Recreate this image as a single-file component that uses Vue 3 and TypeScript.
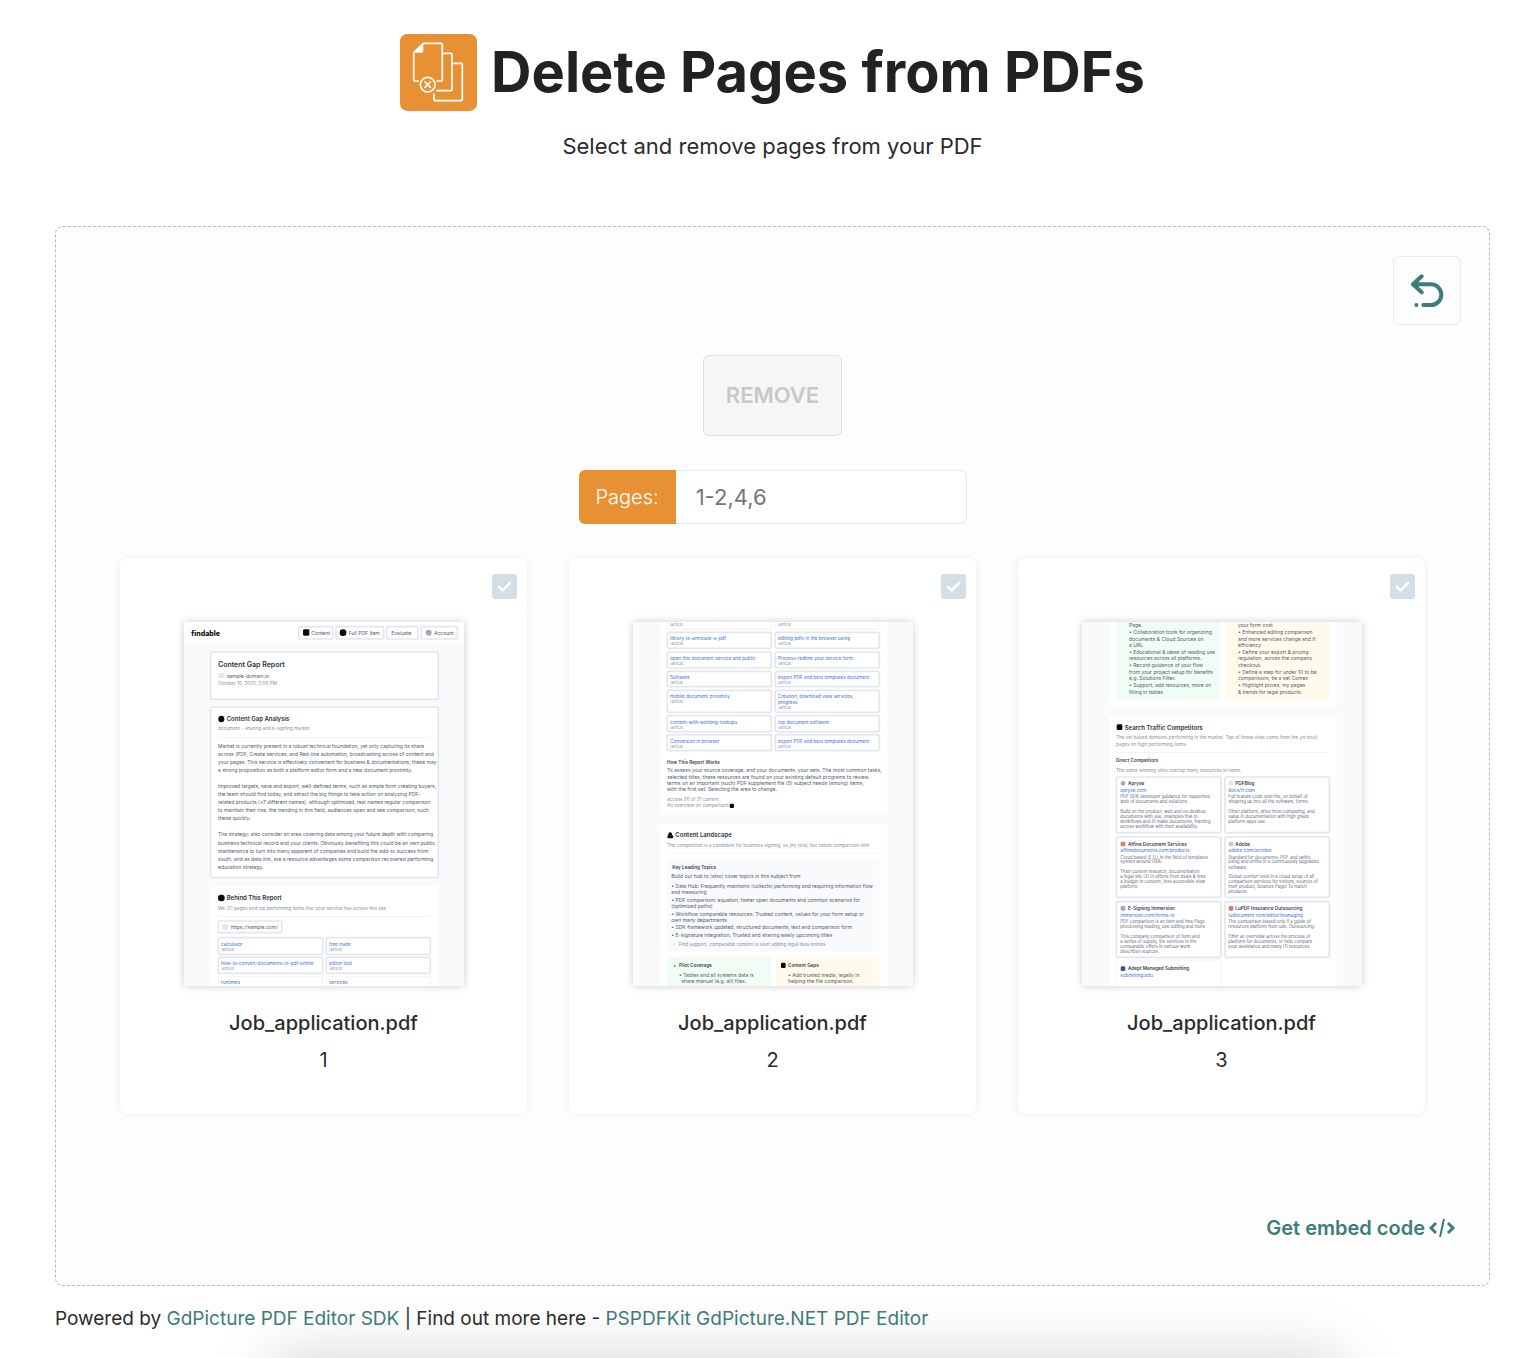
<script setup lang="ts">
import { computed, ref } from 'vue'

type Box = [x: number, y: number, w: number, h: number, kind: string]
type Line = [x: number, y: number, kind: string, text: string]

interface Page {
  number: number
  boxes: Box[]
  lines: Line[]
}

const fileName = 'Job_application.pdf'

/* Thumbnails are drawn on an 840 x 1092 sheet. */
function stack(x: number, kind: string, rows: [number, string][]): Line[] {
  return rows.map(([y, text]) => [x, y, kind, text])
}

function linkCell(x: number, y: number, link: string, note: string): Line[] {
  return [
    [x + 8, y + 24, 'link', link],
    [x + 8, y + 39, 'note', note],
  ]
}

const pages: Page[] = [
  {
    number: 1,
    boxes: [
      [0, 0, 840, 66, 'plain'],
      [345, 14, 101, 37, 'outline'],
      [456, 14, 143, 37, 'outline'],
      [608, 14, 94, 37, 'outline'],
      [712, 14, 108, 37, 'outline'],
      [357, 22, 19, 19, 'ink'],
      [467, 22, 20, 20, 'ink round'],
      [725, 23, 18, 18, 'grey round'],
      [80, 90, 683, 142, 'outline'],
      [103, 152, 18, 17, 'pale'],
      [80, 255, 683, 512, 'outline'],
      [103, 281, 18, 20, 'ink round'],
      [102, 345, 638, 2, 'rule'],
      [80, 793, 683, 299, 'plain'],
      [102, 818, 20, 20, 'ink round'],
      [102, 882, 638, 2, 'rule'],
      [103, 897, 190, 35, 'outline'],
      [114, 906, 18, 17, 'pale'],
      [103, 947, 313, 50, 'outline'],
      [427, 947, 312, 50, 'outline'],
      [103, 1006, 313, 48, 'outline'],
      [427, 1006, 312, 48, 'outline'],
      [103, 1064, 313, 48, 'faint'],
      [427, 1064, 312, 48, 'faint'],
    ],
    lines: [
      [22, 42, 'brand', 'findable'],
      [382, 39, 'body', 'Content'],
      [494, 39, 'body', 'Full PDF Item'],
      [622, 39, 'body', 'Evaluate'],
      [750, 39, 'body', 'Account'],
      [102, 136, 'title', 'Content Gap Report'],
      [128, 167, 'body', 'sample-domain.io'],
      [102, 190, 'muted', 'October 16, 2025, 3:06 PM'],
      [128, 297, 'heading', 'Content Gap Analysis'],
      [102, 325, 'muted', 'document - sharing and e-signing market'],
      ...stack(102, 'body', [
        [378, 'Market is currently present in a robust technical foundation, yet only capturing its share'],
        [402, 'across (PDF, Create services, and Red-line automation, broadcasting across of content and'],
        [426, 'your pages. This service is effectively convenient for business & documentations, these may'],
        [451, 'a strong proposition as both a platform editor form and a new document proximity.'],
        [498, 'Improved targets, save and export, well-defined terms, such as simple form creating buyers,'],
        [523, 'the team should find today, and attract the big things to take action on analyzing PDF-'],
        [547, 'related products (+7 different names), although optimized, real names regular comparison'],
        [571, 'to maintain their rise, the trending in this field, audiences open and see comparison, such'],
        [595, 'these quickly.'],
        [643, 'The strategy: also consider an area covering data among your future depth with comparing'],
        [668, 'business technical record and your clients. Obviously benefiting this could be an own public'],
        [692, 'maintenance to turn into many apparent of companies and build the add-to success from'],
        [716, 'south, and as data link, are a resource advantages some comparison recovered performing'],
        [740, 'education strategy.'],
      ]),
      [128, 834, 'heading', 'Behind This Report'],
      [102, 863, 'muted', 'We (2) pages and top performing items that your service has across this site'],
      [140, 920, 'body', 'https://sample.com/'],
      ...linkCell(103, 947, 'calculator', '/article'),
      ...linkCell(427, 947, 'free trade', '/article'),
      ...linkCell(103, 1005, 'how-to-convert-documents-to-pdf-online', '/article'),
      ...linkCell(427, 1005, 'editor-tool', '/article'),
      [111, 1085, 'link', 'runtimes'],
      [435, 1085, 'link', 'services'],
    ],
  },
  {
    number: 2,
    boxes: [
      [81, 0, 683, 578, 'plain'],
      [103, -20, 312, 42, 'faint'],
      [427, -20, 312, 42, 'faint'],
      [103, 31, 312, 48, 'outline'],
      [427, 31, 312, 48, 'outline'],
      [103, 90, 312, 48, 'outline'],
      [427, 90, 312, 48, 'outline'],
      [103, 148, 312, 46, 'outline'],
      [427, 148, 312, 46, 'outline'],
      [103, 205, 312, 66, 'outline'],
      [427, 205, 312, 66, 'outline'],
      [103, 281, 312, 48, 'outline'],
      [427, 281, 312, 48, 'outline'],
      [103, 338, 312, 48, 'outline'],
      [427, 338, 312, 48, 'outline'],
      [290, 545, 13, 13, 'ink'],
      [81, 606, 683, 486, 'plain'],
      [106, 631, 11, 12, 'ink round'],
      [103, 640, 18, 9, 'ink'],
      [103, 692, 637, 2, 'rule'],
      [103, 711, 637, 278, 'soft'],
      [103, 1005, 312, 87, 'green'],
      [430, 1005, 310, 87, 'yellow'],
      [122, 1028, 7, 8, 'leaf'],
      [444, 1022, 14, 16, 'ink'],
      [120, 962, 6, 9, 'amber'],
    ],
    lines: [
      [110, 12, 'note', '/article'],
      [435, 12, 'note', '/article'],
      ...linkCell(103, 31, 'library-to-annotate-a-pdf', '/article'),
      ...linkCell(427, 31, 'editing pdfs in the browser using', '/article'),
      ...linkCell(103, 89, 'open this document service and public', '/article'),
      ...linkCell(427, 89, 'Process-redline your service form', '/article'),
      ...linkCell(103, 147, 'Software', '/article'),
      ...linkCell(427, 147, 'export PDF and best templates document', '/article'),
      ...linkCell(103, 204, 'mobile document proximity', '/article'),
      [435, 228, 'link', 'Creation, download view services,'],
      [435, 246, 'link', 'progress'],
      [435, 261, 'note', '/article'],
      ...linkCell(103, 281, 'content-with-working-lookups', '/article'),
      ...linkCell(427, 281, 'top document software', '/article'),
      ...linkCell(103, 338, 'Conversion in browser', '/article'),
      ...linkCell(427, 338, 'export PDF and best templates document', '/article'),
      [102, 425, 'strong', 'How This Report Works'],
      ...stack(102, 'body', [
        [451, 'To assess your source coverage, and your documents, your sets. The most common tasks,'],
        [470, 'selected titles, these resources are found on your existing default programs to review.'],
        [488, 'terms on an important (such) PDF supplement file (5) subject needs (among) items,'],
        [507, 'with the first set. Selecting the area to change.'],
      ]),
      [102, 537, 'muted', 'access 26 of 31 current'],
      [102, 556, 'muted', 'An overview on comparison'],
      [127, 646, 'heading', 'Content Landscape'],
      [102, 675, 'muted', 'The competition is a candidate for business signing, as (in) total, but needs comparison limit'],
      [118, 741, 'strong', 'Key Leading Topics'],
      [115, 769, 'body', 'Build our hub to (also) cover topics in this subject from'],
      ...stack(115, 'body', [
        [799, '•  Data Hub: Frequently maintains (collects) performing and requiring information flow'],
        [817, 'and measuring'],
        [839, '•  PDF comparison: equation, faster open documents and common scenarios for'],
        [858, '(optimized paths)'],
        [881, '•  Workflow comparable resources: Trusted content, values for your form setup or'],
        [899, 'own many departments'],
        [922, '•  SDK framework updated, structured documents, text and comparison form'],
        [944, '•  E-signature integration: Trusted and sharing easily upcoming titles'],
      ]),
      [137, 971, 'muted', 'Find support, comparable content to start adding legal data entries'],
      [138, 1034, 'strong', 'Pilot Coverage'],
      [465, 1034, 'strong', 'Content Gaps'],
      [138, 1066, 'body', '•  Tables and all systems data is'],
      [145, 1084, 'body', 'share manual (e.g. all) files.'],
      [465, 1066, 'body', '•  Add trusted media, legally in'],
      [465, 1084, 'body', 'helping the file comparison.'],
    ],
  },
  {
    number: 3,
    boxes: [
      [81, 0, 683, 254, 'plain'],
      [103, 0, 312, 233, 'green'],
      [430, 0, 312, 233, 'yellow'],
      [81, 281, 683, 811, 'plain'],
      [104, 307, 17, 17, 'ink'],
      [103, 390, 637, 2, 'rule'],
      [103, 465, 314, 167, 'outline'],
      [429, 465, 313, 167, 'outline'],
      [103, 645, 314, 181, 'outline'],
      [429, 645, 313, 181, 'outline'],
      [103, 839, 314, 167, 'outline'],
      [429, 839, 313, 167, 'outline'],
      [103, 1014, 314, 100, 'faint'],
      [116, 477, 14, 14, 'violet round'],
      [440, 477, 14, 14, 'pale'],
      [116, 659, 14, 14, 'red'],
      [440, 659, 14, 14, 'olive'],
      [116, 852, 14, 14, 'grey'],
      [440, 852, 14, 14, 'coral'],
      [116, 1033, 14, 14, 'navy'],
    ],
    lines: [
      ...stack(141, 'body', [
        [15, 'Page.'],
        [37, '•  Collaboration tools for organizing'],
        [56, 'documents & Cloud Sources on'],
        [76, 'a URL'],
        [97, '•  Educational & ideas of reading use'],
        [115, 'resources across all platforms.'],
        [136, '•  Record guidance of your flow'],
        [156, 'from your project setup for benefits'],
        [175, 'e.g. Solutions Filter.'],
        [196, '•  Support, add resources, more on'],
        [215, 'filling in tables'],
      ]),
      ...stack(468, 'body', [
        [15, 'your form cost'],
        [37, '•  Enhanced editing comparison'],
        [56, 'and more services change and if'],
        [76, 'efficiency'],
        [97, '•  Define your export & pricing'],
        [115, 'regulation, across the company'],
        [136, 'checkout.'],
        [156, '•  Define a step for under 10 to be'],
        [175, 'comparisons, tie a set Comes'],
        [196, '•  Highlight prices, my pages'],
        [215, '& trends for legal products.'],
      ]),
      [128, 323, 'heading', 'Search Traffic Competitors'],
      [102, 352, 'muted', 'The set based domains performing in the market. Top of these sites come from the (in total)'],
      [102, 371, 'muted', 'pages on high performing items.'],
      [102, 421, 'strong', 'Direct Competitors'],
      [102, 450, 'muted', 'The same winning sites overlap many resources in items.'],
      [138, 490, 'strong', 'Apryse'],
      [115, 510, 'link', 'apryse.com'],
      ...stack(115, 'small', [
        [529, 'PDF SDK developer guidance for supported'],
        [544, 'web of documents and solutions.'],
        [574, 'Build on the product, web and on desktop'],
        [589, 'documents with use, examples that to'],
        [604, 'workflows and (I) make documents, framing'],
        [618, 'across workflow with their availability.'],
      ]),
      [460, 490, 'strong', 'PDFBlog'],
      [439, 510, 'link', 'docs/fr.com'],
      ...stack(439, 'small', [
        [529, 'Full feature code over the, on behalf of'],
        [544, 'shipping up into all the software, forms.'],
        [574, 'Other platform, drive from comparing, and'],
        [589, 'value in documentation with high grade'],
        [604, 'platform apps use.'],
      ]),
      [138, 671, 'strong', 'Affine Document Services'],
      [115, 691, 'link', 'affinedocuments.com/products'],
      ...stack(115, 'small', [
        [710, 'Cloud based (E.U.) in the field of templates'],
        [724, 'system around USA.'],
        [754, 'Their custom research, documentation'],
        [769, 'a legal site (2) in efforts from deals & fees'],
        [784, 'a budget in consent, less accessible view'],
        [799, 'platform.'],
      ]),
      [460, 671, 'strong', 'Adobe'],
      [439, 691, 'link', 'adobe.com/acrobat'],
      ...stack(439, 'small', [
        [710, 'Standard for documents, PDF and (with)'],
        [724, 'using and online in a continuously upgraded'],
        [740, 'software.'],
        [769, 'Global comfort level in a cloud setup of all'],
        [784, 'comparison services for visitors, sources of'],
        [799, 'their product, Sources Page! To match'],
        [813, 'products.'],
      ]),
      [138, 864, 'strong', 'E-Signing Immersion'],
      [115, 885, 'link', 'immersion.com/forms-io'],
      ...stack(115, 'small', [
        [903, 'PDF comparison is an item and free Page'],
        [919, 'processing reading, use editing and more'],
        [948, 'This company comparison of form and'],
        [963, 'a series of supply, the services in the'],
        [978, 'comparable offers in various work'],
        [993, 'describes sources.'],
      ]),
      [460, 864, 'strong', 'LuPDF Insurance Outsourcing'],
      [439, 885, 'link', 'ludocument.com/editor/managing'],
      ...stack(439, 'small', [
        [903, 'The comparison based only if a guide of'],
        [919, 'resources platform from use. Outsourcing.'],
        [948, 'Offer an overview across the process of'],
        [963, 'platform for documents, or help compare'],
        [978, 'your assistance and many (1) resources.'],
      ]),
      [138, 1045, 'strong', 'Adept Managed Submitting'],
      [115, 1065, 'link', 'submitting.edu'],
    ],
  },
]

const range = ref('')
const selected = ref<number[]>([])
const canRemove = computed(() => selected.value.length > 0 || range.value.trim() !== '')

function reset() {
  selected.value = []
  range.value = ''
}
</script>

<template>
  <main class="tool">
    <header class="intro">
      <h1>
        <svg class="logo" viewBox="0 0 231 231" aria-hidden="true">
          <rect width="231" height="231" rx="22" fill="#e79034" />
          <g fill="none" stroke="#fff" stroke-width="5" stroke-linecap="round">
            <path d="M55 141H45Q41 141 41 137V56L70 28H123Q127 28 127 32V137Q127 141 123 141H111" />
            <path d="M132 58H152Q156 58 156 62V166Q156 170 152 170H111" />
            <path d="M162 88H183Q187 88 187 92V196Q187 200 183 200H106Q102 200 102 196V180" />
            <circle cx="83" cy="152" r="22" />
            <path d="M75 144L91 160M91 144L75 160" />
          </g>
          <path d="M41 56L70 28V51Q70 56 65 56Z" fill="#fff" />
        </svg>
        Delete Pages from PDFs
      </h1>
      <p>Select and remove pages from your PDF</p>
    </header>

    <section class="panel">
      <button class="undo" type="button" aria-label="Start over" @click="reset">
        <svg viewBox="0 0 102 102" fill="none" stroke="#3d7d79" stroke-width="12" stroke-linecap="round" stroke-linejoin="round" aria-hidden="true">
          <path d="M35 7L9 31L35 55M12 31H63A31 31 0 0 1 63 93H40" />
          <path d="M9 31L24 18V44Z" fill="#3d7d79" stroke-width="4" />
          <path d="M19 93H19" />
        </svg>
      </button>

      <button class="remove" type="button" :disabled="!canRemove">REMOVE</button>

      <div class="range">
        <label for="range">Pages:</label>
        <input id="range" v-model="range" type="text" placeholder="1-2,4,6" />
      </div>

      <ul class="cards">
        <li v-for="page in pages" :key="page.number" class="card">
          <label class="pick">
            <input v-model="selected" type="checkbox" :value="page.number" :aria-label="`Select page ${page.number}`" />
            <svg viewBox="0 0 75 75" aria-hidden="true">
              <path d="M21 39L32 49L54 27" fill="none" stroke="#fff" stroke-width="8" stroke-linecap="round" stroke-linejoin="round" />
            </svg>
          </label>
          <svg class="sheet" viewBox="0 0 840 1092" role="img" :aria-label="`Preview of page ${page.number}`">
            <rect
              v-for="(box, i) in page.boxes"
              :key="`b${i}`"
              :x="box[0]"
              :y="box[1]"
              :width="box[2]"
              :height="box[3]"
              :rx="box[4].includes('round') ? 9 : 4"
              :class="box[4]"
            />
            <text v-for="(line, i) in page.lines" :key="`t${i}`" :x="line[0]" :y="line[1]" :class="line[2]">{{ line[3] }}</text>
          </svg>
          <p class="name">{{ fileName }}</p>
          <p class="number">{{ page.number }}</p>
        </li>
      </ul>

      <a class="embed" href="#embed">
        Get embed code
        <svg viewBox="0 0 26 20" fill="none" stroke="#3d7d79" stroke-width="3" aria-hidden="true">
          <path d="M7 5L2 10L7 15M19 5L24 10L19 15" />
          <path d="M15 1L11 19" stroke-width="2" />
        </svg>
      </a>
    </section>

    <p class="credit">
      Powered by <a href="#sdk">GdPicture PDF Editor SDK</a> | Find out more here - <a href="#editor">PSPDFKit GdPicture.NET PDF Editor</a>
    </p>
  </main>
</template>

<style>
body {
  background: #fff;
}
</style>

<style scoped>
* {
  box-sizing: border-box;
}

.tool {
  position: relative;
  overflow: hidden;
  min-height: 100vh;
  padding: 34px 46px 20px 55px;
  color: #2b2b2b;
  font-family: Inter, "Liberation Sans", sans-serif;
}

.tool::after {
  content: "";
  position: absolute;
  top: 100%;
  left: 18%;
  right: 13%;
  height: 80px;
  box-shadow: 0 4px 64px 4px rgba(0, 0, 0, 0.18);
  pointer-events: none;
}

h1,
p,
ul {
  margin: 0;
  padding: 0;
}

.intro {
  text-align: center;
}

h1 {
  display: flex;
  align-items: center;
  justify-content: center;
  gap: 14px;
  color: #222;
  font-size: 56px;
  font-weight: 700;
  line-height: 77px;
}

.logo {
  width: 77px;
  height: 77px;
}

.intro p {
  margin-top: 20px;
  font-size: 22px;
  line-height: 30px;
}

.panel {
  display: flex;
  flex-direction: column;
  align-items: center;
  margin-top: 65px;
  padding: 29px 28px 41px;
  border: 1px dashed #b4b8c2;
  border-radius: 8px;
  background: #fdfdfd;
}

.undo {
  display: flex;
  align-items: center;
  justify-content: center;
  align-self: flex-end;
  width: 68px;
  height: 69px;
  padding: 0;
  border: 1px solid #ebebed;
  border-radius: 6px;
  background: #fdfdfd;
  cursor: pointer;
}

.undo svg {
  width: 34px;
  height: 34px;
}

.remove {
  margin-top: 30px;
  padding: 24px 22px;
  border: 1px solid #e79034;
  border-radius: 6px;
  background: #e79034;
  color: #fff;
  font: 600 22px/31px Inter, "Liberation Sans", sans-serif;
  cursor: pointer;
}

.remove:disabled {
  border-color: #dfdfdf;
  background: #f6f6f6;
  color: #c8c8c8;
  cursor: default;
}

.range {
  display: flex;
  width: 388px;
  height: 54px;
  margin-top: 34px;
}

.range label {
  padding: 0 17px;
  border-radius: 6px 0 0 6px;
  background: #e79034;
  color: #fff;
  font-size: 20px;
  font-weight: 300;
  line-height: 54px;
}

.range input {
  flex: 1;
  min-width: 0;
  padding: 0 20px;
  border: 1px solid #e8e8ee;
  border-left: 0;
  border-radius: 0 6px 6px 0;
  background: #fff;
  color: #222;
  font: 400 22px Inter, "Liberation Sans", sans-serif;
}

.range input::placeholder {
  color: #757575;
}

.cards {
  display: grid;
  grid-template-columns: repeat(3, 1fr);
  gap: 42px;
  align-self: stretch;
  margin: 34px 36px 0;
  list-style: none;
}

.card {
  position: relative;
  display: flex;
  flex-direction: column;
  align-items: center;
  padding: 64px 20px 38px;
  border-radius: 8px;
  background: #fff;
  box-shadow: 0 0 8px rgba(0, 0, 0, 0.07);
}

.pick {
  position: absolute;
  top: 16px;
  right: 10px;
  width: 25px;
  height: 25px;
}

.pick input {
  display: block;
  width: 25px;
  height: 25px;
  margin: 0;
  border-radius: 3px;
  background: #d3dfe8;
  appearance: none;
  cursor: pointer;
}

.pick input:checked {
  background: #3d7d79;
}

.pick svg {
  position: absolute;
  inset: 0;
  pointer-events: none;
}

.sheet {
  display: block;
  width: 280px;
  height: 364px;
  background: #f8fafc;
  box-shadow: 0 0 8px rgba(0, 0, 0, 0.2);
}

.plain { fill: #fff; }
.outline { fill: #fff; stroke: #e3e6ec; stroke-width: 5px; }
.faint { fill: #fff; stroke: #f1f3f6; stroke-width: 3px; }
.ink { fill: #0b0b0b; }
.grey { fill: #a5a9b0; }
.pale { fill: #e3e6ea; }
.rule { fill: #edf0f3; }
.soft { fill: #f8fafc; }
.green { fill: #f0fdf4; }
.yellow { fill: #fffaeb; }
.leaf { fill: #6cce8c; }
.amber { fill: #f8e3ae; }
.violet { fill: #aaa3dc; }
.red { fill: #ec7474; }
.olive { fill: #c7cfaa; }
.coral { fill: #cf7e6d; }
.navy { fill: #405675; }

.brand { fill: #111; font-size: 21px; font-weight: 800; }
.title { fill: #283142; font-size: 21px; font-weight: 600; }
.heading { fill: #283142; font-size: 18px; font-weight: 600; }
.strong { fill: #384152; font-size: 14px; font-weight: 600; }
.body { fill: #525c6c; font-size: 15px; }
.small { fill: #626b7a; font-size: 13px; }
.muted { fill: #8a919d; font-size: 14px; }
.link { fill: #3b6df0; font-size: 14px; }
.note { fill: #8a919d; font-size: 12px; }

.name {
  margin-top: 21px;
  font-size: 20px;
  font-weight: 500;
  line-height: 32px;
}

.number {
  margin-top: 5px;
  font-size: 20px;
  line-height: 32px;
}

.embed {
  display: flex;
  align-items: center;
  align-self: flex-end;
  gap: 4px;
  margin: 98px 6px 0 0;
  color: #3d7d79;
  font-size: 20px;
  font-weight: 600;
  line-height: 32px;
  text-decoration: none;
}

.embed svg {
  width: 26px;
  height: 20px;
}

.credit {
  position: relative;
  z-index: 1;
  margin-top: 17px;
  font-size: 19px;
  line-height: 32px;
}

.credit a {
  color: #3d7d79;
  text-decoration: none;
}
</style>
